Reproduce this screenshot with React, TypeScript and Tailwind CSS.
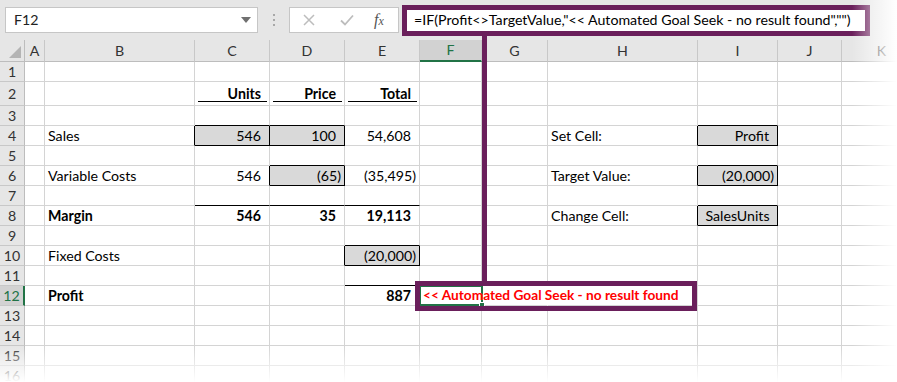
import React from 'react';

type Cell = {
  t: string;
  align?: 'l' | 'r' | 'c';
  bold?: boolean;
  fill?: boolean;
  neg?: boolean;
  ul?: boolean;
};

const COLS = ['A', 'B', 'C', 'D', 'E', 'F', 'G', 'H', 'I', 'J', 'K'];
const ROWS = Array.from({ length: 16 }, (_, i) => i + 1);

const cells: Record<string, Cell> = {
  C2: { t: 'Units', align: 'r', bold: true, ul: true },
  D2: { t: 'Price', align: 'r', bold: true, ul: true },
  E2: { t: 'Total', align: 'r', bold: true, ul: true },
  B4: { t: 'Sales' },
  C4: { t: '546', align: 'r', fill: true },
  D4: { t: '100', align: 'r', fill: true },
  E4: { t: '54,608', align: 'r' },
  H4: { t: 'Set Cell:' },
  I4: { t: 'Profit', align: 'r', fill: true },
  B6: { t: 'Variable Costs' },
  C6: { t: '546', align: 'r' },
  D6: { t: '(65)', align: 'r', fill: true, neg: true },
  E6: { t: '(35,495)', align: 'r', neg: true },
  H6: { t: 'Target Value:' },
  I6: { t: '(20,000)', align: 'r', fill: true, neg: true },
  B8: { t: 'Margin', bold: true },
  C8: { t: '546', align: 'r', bold: true },
  D8: { t: '35', align: 'r', bold: true },
  E8: { t: '19,113', align: 'r', bold: true },
  H8: { t: 'Change Cell:' },
  I8: { t: 'SalesUnits', align: 'c', fill: true },
  B10: { t: 'Fixed Costs' },
  E10: { t: '(20,000)', align: 'r', fill: true, neg: true },
  B12: { t: 'Profit', bold: true },
  E12: { t: '887', align: 'r', bold: true },
};

// cell borders drawn black instead of gridline grey
const blackRight = new Set(['B4', 'C4', 'D4', 'C6', 'D6', 'D10', 'E10', 'H4', 'I4', 'H6', 'I6', 'H8', 'I8']);
const blackBottom = new Set([
  'C3', 'D3', 'C4', 'D4', 'D5', 'D6', 'E9', 'E10',
  'I3', 'I4', 'I5', 'I6', 'I7', 'I8', 'C7', 'D7', 'E7', 'E11',
]);
// gridlines hidden under the overflowing F12 text
const noRight = new Set(['F12', 'G12']);

function GridCell({ col, row }: { col: string; row: number }) {
  const id = `${col}${row}`;
  const c = cells[id];
  const h = row === 2 ? 'h-[24px]' : 'h-[20px]';
  const right = noRight.has(id) ? 'border-r-white' : blackRight.has(id) ? 'border-r-black' : 'border-r-[#d4d4d4]';
  const bottom = blackBottom.has(id) ? 'border-b-black' : 'border-b-[#d4d4d4]';
  const justify = !c || !c.align || c.align === 'l' ? 'justify-start pl-[3px]' : c.align === 'c' ? 'justify-center' : c.neg ? 'justify-end pr-[3px]' : 'justify-end pr-[8px]';

  if (id === 'F12') {
    return (
      <div className={`relative ${h} border-r border-b ${right} ${bottom} z-10`}>
        <div className="absolute -left-px -top-px w-[64px] h-[21px] border-2 border-[#217346]" />
        <div className="absolute left-[59px] top-[16px] w-[6px] h-[6px] bg-[#217346] border border-white" />
        <div className="absolute left-[3px] top-0 h-full flex items-center whitespace-nowrap font-bold text-[#ff0000] text-[13.7px]">
          &lt;&lt; Automated Goal Seek - no result found
        </div>
      </div>
    );
  }

  return (
    <div className={`relative ${h} border-r border-b ${right} ${bottom} ${c?.fill ? 'bg-[#d9d9d9]' : 'bg-white'} flex items-center ${justify} whitespace-nowrap ${c?.bold ? 'font-bold' : ''}`}>
      {c?.t}
      {c?.ul && <div className="absolute left-[3px] right-[2px] bottom-[3px] h-[1.5px] bg-black" />}
    </div>
  );
}

export default function App() {
  return (
    <div className="relative w-[897px] h-[382px] overflow-hidden bg-white text-[14.2px] text-black font-['Lato','Noto_Sans',sans-serif]">
      {/* formula bar strip */}
      <div className="flex items-center h-[40px] pl-[5px] bg-[#e6e6e6]">
        <div className="w-[253px] h-[26px] bg-white border border-[#c6c6c6] flex items-center justify-between pl-[8px] pr-[6px] text-[#222]">
          <span>F12</span>
          <svg width="10" height="6" viewBox="0 0 10 6"><path d="M0 0h10L5 6z" fill="#707070" /></svg>
        </div>
        <div className="w-[31px] flex flex-col items-center gap-[3px]">
          <div className="w-[2px] h-[2px] bg-[#a8a8a8]" />
          <div className="w-[2px] h-[2px] bg-[#a8a8a8]" />
          <div className="w-[2px] h-[2px] bg-[#a8a8a8]" />
        </div>
        <div className="w-[110px] h-[26px] bg-white border border-[#c6c6c6] flex items-center">
          <svg className="ml-[13px]" width="12" height="12" viewBox="0 0 12 12">
            <path d="M1 1l10 10M11 1L1 11" stroke="#bdbdbd" strokeWidth="1.5" />
          </svg>
          <svg className="ml-[25px]" width="14" height="12" viewBox="0 0 14 12">
            <path d="M1 6.5l4 4 8-9" stroke="#bdbdbd" strokeWidth="1.8" fill="none" />
          </svg>
          <span className="ml-[20px] italic text-[#555] font-['Liberation_Serif',serif] text-[16px] leading-none">
            f<span className="text-[12px]">x</span>
          </span>
        </div>
        <div className="ml-[3px] w-[468px] h-[31px] bg-white border-[5px] border-[#6a1f5b] flex items-center pl-[7px] whitespace-nowrap">
          =IF(Profit&lt;&gt;TargetValue,"&lt;&lt; Automated Goal Seek - no result found","")
        </div>
      </div>

      {/* sheet grid */}
      <div className="grid grid-cols-[25px_20px_150px_75px_75px_75px_62px_66px_150px_80px_64px_80px]">
        <div className="h-[22px] bg-[#e6e6e6] border-r border-b border-[#bdbdbd] flex items-end justify-end p-[3px]">
          <svg width="12" height="12" viewBox="0 0 12 12"><path d="M12 0v12H0z" fill="#b4b4b4" /></svg>
        </div>
        {COLS.map((col) =>
          col === 'F' ? (
            <div key={col} className="h-[22px] bg-[#d2d2d2] border-r border-r-[#c8c8c8] border-b-2 border-b-[#217346] flex items-center justify-center text-[#217346]">
              {col}
            </div>
          ) : (
            <div key={col} className="h-[22px] bg-[#e6e6e6] border-r border-r-[#c8c8c8] border-b border-b-[#bdbdbd] flex items-center justify-center text-[#333]">
              {col}
            </div>
          )
        )}
        {ROWS.map((row) => (
          <React.Fragment key={row}>
            {row === 12 ? (
              <div className="h-[20px] bg-[#d2d2d2] border-r-2 border-r-[#217346] border-b border-b-[#c8c8c8] flex items-center justify-center text-[#217346]">
                {row}
              </div>
            ) : (
              <div className={`${row === 2 ? 'h-[24px]' : 'h-[20px]'} bg-[#e6e6e6] border-r border-r-[#bdbdbd] border-b border-b-[#c8c8c8] flex items-center justify-center text-[#333]`}>
                {row}
              </div>
            )}
            {COLS.map((col) => (
              <GridCell key={col} col={col} row={row} />
            ))}
          </React.Fragment>
        ))}
      </div>

      {/* callout drawn over the sheet */}
      <div className="absolute left-[482px] top-[35px] w-[5px] h-[247px] bg-[#6a1f5b] z-20" />
      <div className="absolute left-[415px] top-[281px] w-[282px] h-[30px] border-[5px] border-[#6a1f5b] z-20" />

      {/* torn-edge fades */}
      <div className="absolute top-0 right-0 w-[45px] h-full bg-gradient-to-r from-white/0 to-white z-30" />
      <div className="absolute left-0 bottom-0 w-full h-[36px] bg-gradient-to-b from-white/0 to-white z-30" />
    </div>
  );
}
